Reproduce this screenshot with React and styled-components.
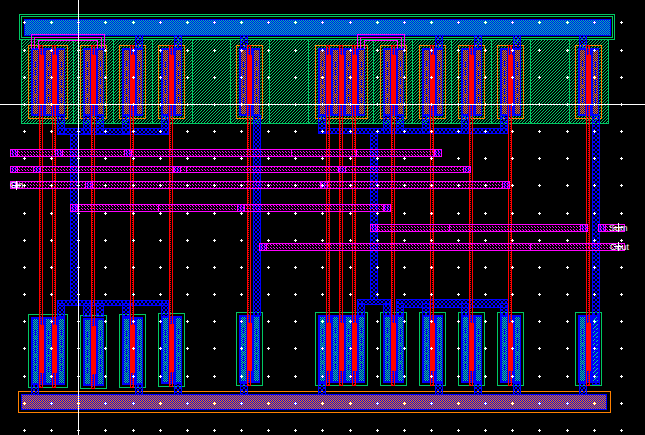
import React from 'react';
import styled, { createGlobalStyle } from 'styled-components';

const GREEN = '#00c864';
const BLUE = '#0000ff';
const ORANGE = '#ff8000';
const RED = '#ff0000';
const MAGENTA = '#ff00ff';

const GlobalStyle = createGlobalStyle`
  html, body {
    margin: 0;
    background: #000;
    overflow: hidden;
  }
`;

const Canvas = styled.svg`
  display: block;
  width: 645px;
  height: 435px;
  background: #000;
  shape-rendering: crispEdges;
`;

const Well = styled.rect`
  fill: url(#wellHatch);
  stroke: ${GREEN};
`;
const Divider = styled.line`
  stroke: ${GREEN};
`;
const Frame = styled.rect`
  fill: none;
  stroke: ${(p) => p.$color};
`;
const Active = styled.rect`
  fill: ${BLUE};
`;
const Contact = styled.rect`
  fill: url(#${(p) => p.$kind});
`;
const ContactCore = styled.line`
  stroke: ${BLUE};
  stroke-dasharray: 6 3;
`;
const Rail = styled.rect`
  fill: url(#${(p) => p.$kind});
  stroke: ${BLUE};
  stroke-width: 1.5;
`;
const Metal1 = styled.rect`
  fill: url(#metalHatch);
  stroke: ${BLUE};
`;
const PolyWire = styled.rect`
  fill: url(#polyStipple);
  stroke: ${RED};
`;
const PolyGate = styled.rect`
  fill: ${RED};
`;
const Metal2 = styled.rect`
  fill: url(#metal2Dots);
  stroke: ${MAGENTA};
`;
const Metal2Break = styled.line`
  stroke: ${MAGENTA};
`;
const Via = styled.rect`
  fill: url(#viaHatch);
  stroke: ${MAGENTA};
`;
const GateLink = styled.path`
  fill: none;
  stroke: ${MAGENTA};
`;
const Tick = styled.path`
  fill: none;
  stroke: #fff;
`;
const Cursor = styled.line`
  stroke: #fff;
`;
const Label = styled.text`
  fill: #fff;
  font-family: 'Liberation Sans', Arial, sans-serif;
  font-size: 9px;
  text-rendering: geometricPrecision;
`;

function Checker({ id, a, b }) {
  return (
    <pattern id={id} width="2" height="2" patternUnits="userSpaceOnUse">
      <rect width="2" height="2" fill={a} />
      <rect width="1" height="1" fill={b} />
      <rect x="1" y="1" width="1" height="1" fill={b} />
    </pattern>
  );
}

function Pixels({ id, size, height, color, cells }) {
  return (
    <pattern id={id} width={size} height={height || size} patternUnits="userSpaceOnUse">
      {cells.map(([x, y]) => (
        <rect key={`${x}${y}`} x={x} y={y} width="1" height="1" fill={color} />
      ))}
    </pattern>
  );
}

function Patterns() {
  return (
    <defs>
      <Pixels id="wellHatch" size={3} color={GREEN} cells={[[2, 0], [1, 1], [0, 2]]} />
      <Pixels
        id="metalHatch"
        size={4}
        color={BLUE}
        cells={[[0, 0], [1, 1], [2, 2], [3, 3], [3, 0], [2, 1], [1, 2], [0, 3]]}
      />
      <Pixels id="polyStipple" size={2} color={RED} cells={[[0, 0]]} />
      <Pixels id="metal2Dots" size={3} color={MAGENTA} cells={[[0, 1], [1, 2]]} />
      <pattern id="viaHatch" width="3" height="3" patternUnits="userSpaceOnUse">
        <rect x="2" width="1" height="1" fill={BLUE} />
        <rect x="1" y="1" width="1" height="1" fill={BLUE} />
        <rect y="2" width="1" height="1" fill={BLUE} />
        <rect width="1" height="1" fill={MAGENTA} />
      </pattern>
      <Checker id="pdiff" a={ORANGE} b="#000080" />
      <Checker id="ndiff" a="#00e090" b="#0000c0" />
      <Checker id="topRail" a="#00c8a0" b={BLUE} />
      <Checker id="bottomRail" a={ORANGE} b={BLUE} />
    </defs>
  );
}

// x of each transistor, fingers, y of its lower twin
const CELLS = [
  { x: 28, fingers: 2, low: 314 },
  { x: 80, fingers: 1, low: 315 },
  { x: 119, fingers: 1, low: 314 },
  { x: 158, fingers: 1, low: 313 },
  { x: 236, fingers: 1, low: 312 },
  { x: 315, fingers: 3, low: 312 },
  { x: 380, fingers: 1, low: 312 },
  { x: 419, fingers: 1, low: 312 },
  { x: 458, fingers: 1, low: 312 },
  { x: 497, fingers: 1, low: 312 },
  { x: 575, fingers: 1, low: 312 },
];

const WELL_LINES = [73, 113, 152, 192, 230, 269, 308, 373, 412, 451, 491, 530, 569];
const TOP_Y = 45;
const CELL_H = 73;

// metal 1: [x0, y0, x1, y1]
const UP_STRAPS = [135, 174, 240, 435, 474, 513, 579];
const DOWN_STRAPS = [31, 135, 174, 240, 318, 435, 474, 513, 579];
const BUS_DROPS = [57, 83, 96, 122, 161, 318, 383, 396, 422, 461, 500];
const LOW_DROPS = [57, 83, 96, 122, 161, 357, 383, 396, 422, 461, 500];
const METAL1 = [
  [57, 128, 169, 134],
  [318, 128, 507, 133],
  [70, 134, 78, 300],
  [370, 133, 377, 299],
  [253, 115, 260, 315],
  [592, 115, 599, 384],
  [57, 300, 168, 305],
  [357, 299, 390, 304],
  [396, 299, 508, 307],
];

// metal 2 runs with their break marks and via squares
const METAL2 = [
  { x0: 10, x1: 441, y0: 149, y1: 156, breaks: [291, 356], vias: [10, 55, 124, 434] },
  { x0: 10, x1: 470, y0: 166, y1: 172, breaks: [186], vias: [10, 33, 173, 338, 463] },
  { x0: 10, x1: 509, y0: 181, y1: 188, breaks: [], vias: [10, 85, 320, 502] },
  { x0: 70, x1: 390, y0: 204, y1: 211, breaks: [158], vias: [70, 237, 383] },
  { x0: 370, x1: 587, y0: 224, y1: 231, breaks: [449], vias: [370, 580] },
  { x0: 598, x1: 624, y0: 224, y1: 231, breaks: [], vias: [598] },
  { x0: 259, x1: 624, y0: 243, y1: 250, breaks: [530], vias: [259] },
];

const GATE_LINKS = [
  { x0: 31, x1: 104 },
  { x0: 357, x1: 404 },
];

const LABELS = [
  { text: 'Cin', x: 10, y: 188, cx: 16, cy: 185 },
  { text: 'Sum', x: 609, y: 231, cx: 618, cy: 227 },
  { text: 'Cout', x: 610, y: 250, cx: 618, cy: 246 },
];

const GRID_X = Array.from({ length: 23 }, (_, i) => Math.round(24 + i * 27.125));
const GRID_Y = Array.from({ length: 16 }, (_, i) => Math.round(22.4 + i * 27.17));

const half = (v) => v + 0.5;

function Box({ as: Comp, x0, y0, x1, y1, ...rest }) {
  return <Comp x={half(x0)} y={half(y0)} width={x1 - x0} height={y1 - y0} {...rest} />;
}

function Transistor({ x, y, fingers, kind, frame }) {
  const w = 26 + 13 * (fingers - 1);
  const cols = Array.from({ length: fingers + 1 }, (_, i) => x + 3 + 13 * i);
  return (
    <g>
      <Active x={x + 3} y={y + 3} width={w - 5} height={CELL_H - 5} />
      {cols.map((cx) => (
        <g key={cx}>
          <Contact x={cx + 2} y={y + 5} width={5} height={CELL_H - 9} $kind={kind} />
          <ContactCore x1={cx + 4.5} y1={y + 16} x2={cx + 4.5} y2={y + CELL_H - 14} />
        </g>
      ))}
      <Box as={Frame} x0={x} y0={y} x1={x + w} y1={y + CELL_H} $color={frame} />
    </g>
  );
}

function PolyStripe({ x, low }) {
  return (
    <g>
      <Box as={PolyWire} x0={x} y0={TOP_Y} x1={x + 3} y1={low + CELL_H} />
      <PolyGate x={x} y={55} width={5} height={50} />
      <PolyGate x={x} y={low + 11} width={5} height={48} />
    </g>
  );
}

function App() {
  const polys = CELLS.flatMap(({ x, fingers, low }) =>
    Array.from({ length: fingers }, (_, i) => ({ x: x + 11 + 13 * i, low }))
  );

  return (
    <>
      <GlobalStyle />
      <Canvas viewBox="0 0 645 435" xmlns="http://www.w3.org/2000/svg">
        <Patterns />

        <Box as={Well} x0={21} y0={39} x1={608} y1={123} />
        {WELL_LINES.map((x) => (
          <Divider key={x} x1={half(x)} y1={39} x2={half(x)} y2={123} />
        ))}

        <Box as={Frame} x0={19} y0={14} x1={614} y1={39} $color={GREEN} />
        <Box as={Frame} x0={21} y0={16} x1={612} y1={37} $color={GREEN} />
        <Box as={Rail} x0={24} y0={19} x1={610} y1={35} $kind="topRail" />

        <Box as={Frame} x0={18} y0={391} x1={610} y1={412} $color={ORANGE} />
        <Box as={Rail} x0={21} y0={394} x1={606} y1={409} $kind="bottomRail" />

        {CELLS.map((c) => (
          <React.Fragment key={c.x}>
            <Transistor x={c.x} y={TOP_Y} fingers={c.fingers} kind="pdiff" frame={ORANGE} />
            <Transistor x={c.x} y={c.low} fingers={c.fingers} kind="ndiff" frame={GREEN} />
          </React.Fragment>
        ))}

        {UP_STRAPS.map((x) => (
          <Box key={x} as={Metal1} x0={x} y0={35} x1={x + 7} y1={48} />
        ))}
        {DOWN_STRAPS.map((x) => (
          <Box key={x} as={Metal1} x0={x} y0={383} x1={x + 7} y1={394} />
        ))}
        {BUS_DROPS.map((x) => (
          <Box key={x} as={Metal1} x0={x} y0={115} x1={x + 7} y1={133} />
        ))}
        {LOW_DROPS.map((x) => (
          <Box key={x} as={Metal1} x0={x} y0={303} x1={x + 7} y1={316} />
        ))}
        {METAL1.map(([x0, y0, x1, y1]) => (
          <Box key={`${x0}-${y0}`} as={Metal1} x0={x0} y0={y0} x1={x1} y1={y1} />
        ))}

        {polys.map((p) => (
          <PolyStripe key={p.x} x={p.x} low={p.low} />
        ))}

        {GATE_LINKS.map(({ x0, x1 }) => (
          <g key={x0}>
            <GateLink d={`M${x0 + 0.5} 48.5V34.5H${x1 + 0.5}V48.5`} />
            <GateLink d={`M${x0 + 3.5} 48.5V37.5H${x1 - 2.5}V48.5`} />
            <GateLink d={`M${x0 + 7.5} 48.5V40.5H${x1 - 6.5}V48.5`} />
          </g>
        ))}

        {METAL2.map((m) => (
          <g key={`${m.x0}-${m.y0}`}>
            <Box as={Metal2} x0={m.x0} y0={m.y0} x1={m.x1} y1={m.y1} />
            {m.breaks.map((x) => (
              <Metal2Break key={x} x1={half(x)} y1={m.y0} x2={half(x)} y2={m.y1} />
            ))}
            {m.vias.map((x) => (
              <Box key={x} as={Via} x0={x} y0={m.y0} x1={x + 7} y1={m.y1} />
            ))}
          </g>
        ))}

        {GRID_Y.map((y) =>
          GRID_X.map((x) => (
            <Tick key={`${x}-${y}`} d={`M${x - 1} ${half(y)}H${x + 2}M${half(x)} ${y - 1}V${y + 2}`} />
          ))
        )}

        <Cursor x1={0} y1={104.5} x2={645} y2={104.5} />
        <Cursor x1={78.5} y1={0} x2={78.5} y2={435} />

        {LABELS.map((l) => (
          <g key={l.text}>
            <Label x={l.x} y={l.y}>{l.text}</Label>
            <Tick d={`M${l.cx - 4} ${half(l.cy)}H${l.cx + 5}M${half(l.cx)} ${l.cy - 4}V${l.cy + 5}`} />
          </g>
        ))}
      </Canvas>
    </>
  );
}

export default App;
